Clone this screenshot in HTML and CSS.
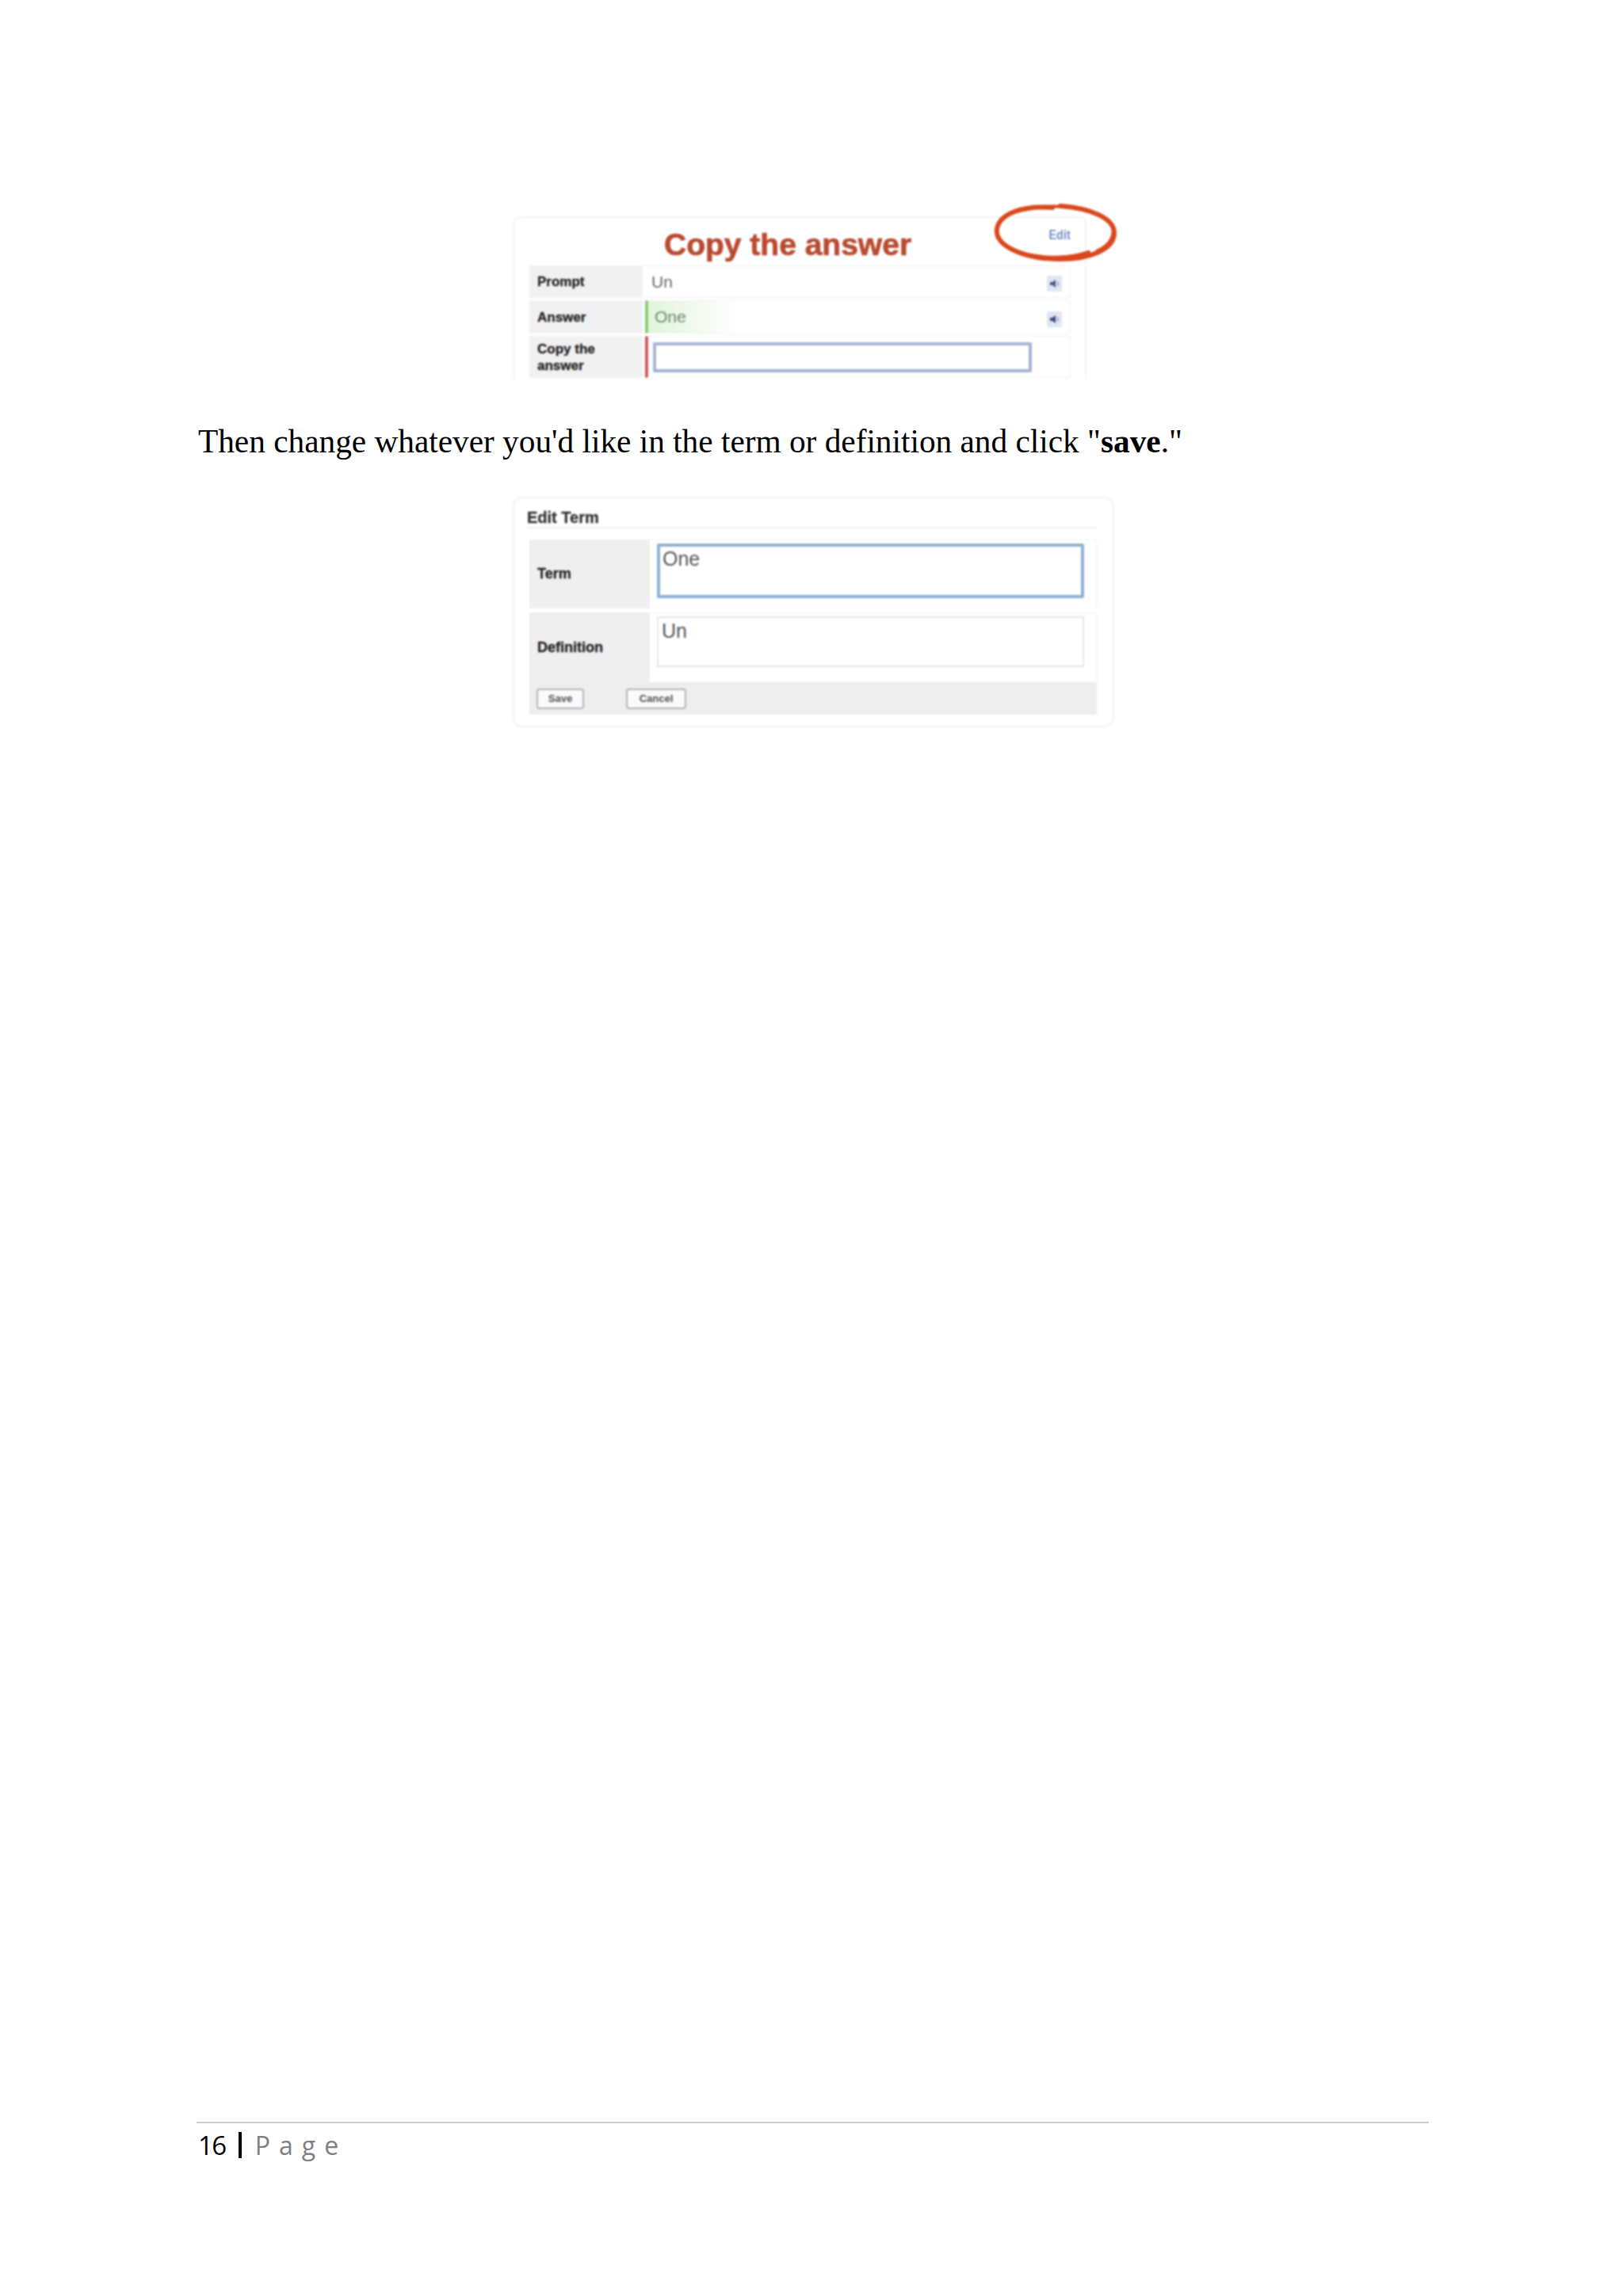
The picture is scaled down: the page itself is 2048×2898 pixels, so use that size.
FILE: index.html
```html
<!DOCTYPE html>
<html lang="en">
<head>
    <meta charset="UTF-8">
    <title>Page 16</title>
    <link rel="stylesheet" href="styles.css">
</head>
<body>
    <div class="page">
        <div class="shot copy-card">
            <h2 class="copy-title">Copy the answer</h2>
            <a class="edit-link">Edit</a>
            <svg class="edit-ring" width="156" height="76" viewBox="0 0 156 76" fill="none" stroke="#d8481e" stroke-linecap="round">
                <path stroke-width="6" d="M74 6C36 3 7 14 4 33c-3 20 30 37 76 38 40 1 72-12 72-33C152 20 124 7 84 4"/>
                <path stroke-width="4" d="M38 9C62 2 110 2 136 17M16 54c22 15 70 20 104 8"/>
                <path stroke-width="2.5" d="M8 26C16 14 30 8 48 6M130 60c12-5 20-14 20-26"/>
            </svg>
            <div class="rows">
                <div class="row row-prompt">
                    <div class="label">Prompt</div>
                    <div class="value">
                        <span class="value-text">Un</span>
                        <span class="speaker">
                            <svg width="13" height="12" viewBox="0 0 13 12"><path fill="#4a5a80" d="M1 4h3l4-3v10L4 8H1z"/><path fill="none" stroke="#8a9ac0" stroke-width="1.4" d="M10 3.5c1.2 1.4 1.2 3.6 0 5"/></svg>
                        </span>
                    </div>
                </div>
                <div class="row row-answer">
                    <div class="label">Answer</div>
                    <div class="value value-green">
                        <span class="value-text">One</span>
                        <span class="speaker">
                            <svg width="13" height="12" viewBox="0 0 13 12"><path fill="#3c4a70" d="M1 4h3l4-3v10L4 8H1z"/><path fill="none" stroke="#8a9ac0" stroke-width="1.4" d="M10 3.5c1.2 1.4 1.2 3.6 0 5"/></svg>
                        </span>
                    </div>
                </div>
                <div class="row row-copy">
                    <div class="label">Copy the<br>answer</div>
                    <div class="value value-red">
                        <input class="copy-input" type="text">
                    </div>
                </div>
            </div>
        </div>

        <p class="instructions">Then change whatever you'd like in the term or definition and click "<b>save</b>."</p>

        <div class="shot term-card">
            <h3 class="term-title">Edit Term</h3>
            <div class="term-row term-row-first">
                <div class="term-label">Term</div>
                <div class="term-value"><textarea class="term-box term-box-focus">One</textarea></div>
            </div>
            <div class="term-row">
                <div class="term-label">Definition</div>
                <div class="term-value"><textarea class="term-box">Un</textarea></div>
            </div>
            <div class="term-actions">
                <button class="term-btn save-btn">Save</button>
                <button class="term-btn cancel-btn">Cancel</button>
            </div>
        </div>

        <div class="footer">
            <span class="page-num">16</span>
            <span class="page-bar"></span>
            <span class="page-word">Page</span>
        </div>
    </div>
</body>
</html>
```

FILE: styles.css
```css
body { margin: 0; background: #fff; font-family: "Liberation Sans", Arial, sans-serif; }
.page { box-sizing: border-box; width: 2048px; height: 2898px; padding: 273px 245px 166px 250px; display: flex; flex-direction: column; }
.shot { filter: blur(1.1px); }

/* first screenshot */
.copy-card { position: relative; box-sizing: border-box; width: 723px; height: 207px; margin-left: 398px; padding: 0 18px; border: 2px solid #f5f5f5; border-bottom: 0; border-radius: 8px 8px 0 0; }
.copy-title { margin: 0 0 0 170px; height: 60px; padding-top: 12px; box-sizing: border-box; font-size: 39px; line-height: 44px; font-weight: bold; color: #b84a30; -webkit-text-stroke: 0.7px #b84a30; }
.edit-link { position: absolute; left: 672px; top: 13px; font-size: 16px; font-weight: bold; color: #6f8cc8; transform: scaleX(0.9); }
.edit-ring { position: absolute; left: 604px; top: -19px; }
.rows { display: flex; flex-direction: column; gap: 3px; }
.row { display: flex; width: 683px; }
.row-prompt { height: 41px; }
.row-answer { height: 42px; }
.row-copy { height: 53px; }
.label { box-sizing: border-box; width: 143px; padding-left: 10px; background: #f1f1f1; font-size: 17px; line-height: 21px; font-weight: bold; color: #222; -webkit-text-stroke: 0.3px #222; display: flex; align-items: center; }
.value { flex: 1; display: flex; align-items: center; justify-content: space-between; box-sizing: border-box; padding: 0 10px 0 11px; border: 1px solid #f2f2f2; border-left: 0; }
.value-text { font-size: 21px; color: #666; }
.value-green { margin-left: 3px; padding-left: 8px; border-left: 4px solid #8ecb78; background: linear-gradient(90deg, #e2f4dc, #fff 110px); }
.value-green .value-text { color: #6f8c6f; }
.value-red { margin-left: 3px; padding-left: 6px; border-left: 4px solid #d45a5e; }
.speaker { width: 19px; height: 20px; margin-top: 5px; border-radius: 2px; background: #dfe5f3; display: flex; align-items: center; justify-content: center; }
.copy-input { box-sizing: border-box; width: 478px; height: 38px; padding: 0; border: 4px solid #a5b4d2; border-radius: 2px; background: #fff; outline: 0; }

.instructions { margin: 54px 0 47px; font-family: "Liberation Serif", "Times New Roman", serif; font-size: 41.3px; line-height: 46px; color: #000; }

/* second screenshot */
.term-card { box-sizing: border-box; width: 759px; height: 291px; margin-left: 397px; padding: 14px 20px 0 19px; border: 2px solid #f3f3f3; border-radius: 12px; }
.term-title { margin: 0 0 14px -3px; padding-bottom: 2px; height: 20px; border-bottom: 2px solid #eee; font-size: 20px; line-height: 20px; font-weight: bold; color: #333; -webkit-text-stroke: 0.3px #333; }
.term-row { display: flex; height: 88px; margin-bottom: 5px; }
.term-row-first { height: 87px; }
.term-label { box-sizing: border-box; width: 152px; padding-left: 10px; background: #efefef; font-size: 18px; font-weight: bold; color: #222; -webkit-text-stroke: 0.3px #222; display: flex; align-items: center; }
.term-value { flex: 1; padding: 4px 15px 0 9px; border: 1px solid #f3f3f3; border-left: 0; border-bottom: 0; }
.term-box { display: block; box-sizing: border-box; width: 100%; height: 64px; padding: 2px 4px; resize: none; border: 2px solid #e6e6e6; background: #fff; outline: 0; font-family: "Liberation Sans", Arial, sans-serif; font-size: 25px; line-height: 28px; color: #555; overflow: hidden; }
.term-box-focus { height: 69px; padding: 1px 3px; border: 4px solid #8fb0d2; border-radius: 2px; }
.term-actions { display: flex; align-items: center; gap: 53px; height: 41px; margin-top: -5px; padding-left: 9px; background: #eee; }
.term-btn { box-sizing: border-box; height: 26px; padding: 0; border: 2px solid #b5b5b5; border-radius: 4px; background: #fafafa; font-family: "Liberation Sans", Arial, sans-serif; font-size: 13px; font-weight: bold; color: #555; }
.save-btn { width: 60px; }
.cancel-btn { width: 76px; }

/* page footer */
.footer { margin-top: auto; margin-left: -2px; display: flex; align-items: center; gap: 10px; height: 50px; padding: 2px 0 0 2px; box-sizing: content-box; border-top: 2px solid #ccc; }
.page-num { font-family: "Open Sans", sans-serif; font-size: 33px; letter-spacing: -1.5px; color: #000; }
.page-bar { width: 4px; height: 33px; margin: 0 6px; background: #000; }
.page-word { font-family: "Open Sans", sans-serif; font-size: 32px; letter-spacing: 11px; color: #808080; margin-left: 1px; }
```
